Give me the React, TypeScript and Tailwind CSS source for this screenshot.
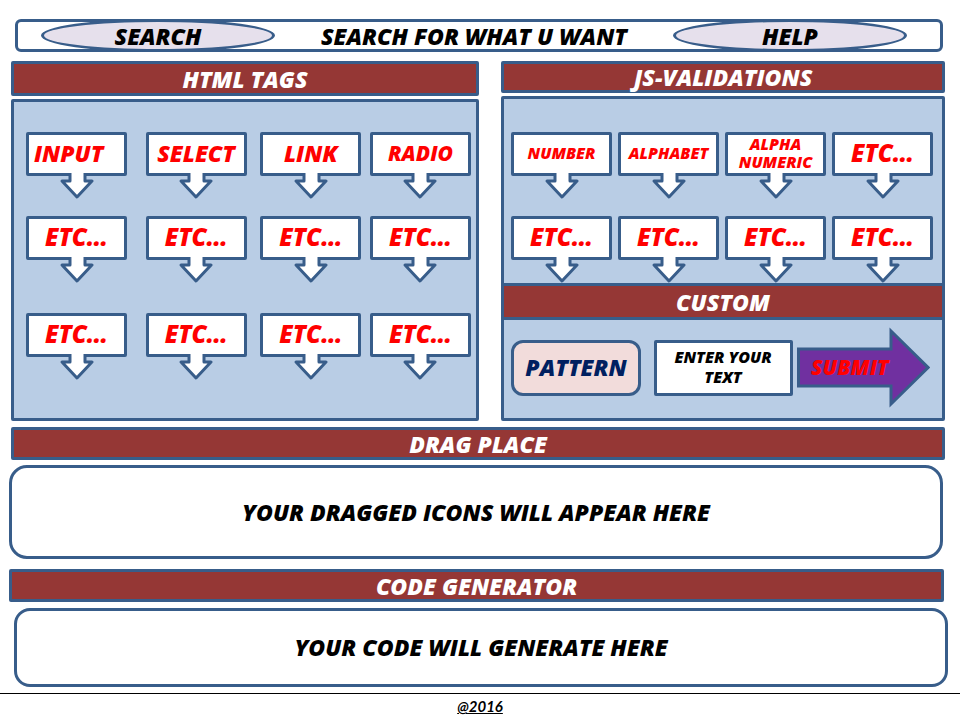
import type { ReactNode } from "react";

const tags = [
  { label: "INPUT", style: "text-[23px] justify-start" },
  { label: "SELECT", style: "text-[23px] justify-center" },
  { label: "LINK", style: "text-[23px] justify-center" },
  { label: "RADIO", style: "text-[21px] justify-center" },
];

const validations = [
  { label: "NUMBER", style: "text-base justify-center" },
  { label: "ALPHABET", style: "text-base justify-center" },
  { label: "ALPHA NUMERIC", style: "text-base justify-center" },
  { label: "ETC…", style: "text-2xl justify-center" },
];

const etc = { label: "ETC…", style: "text-2xl justify-center" };

function Callout({ label, style }: { label: string; style: string }) {
  return (
    <button type="button" className="flex w-[101px] flex-col items-center font-extrabold italic text-[#ff0000]">
      <span
        className={`flex h-[44px] w-full items-center rounded-xs border-3 border-[#385d8a] bg-white px-[5px] pb-[2px] ${style} leading-[18px]`}
      >
        {label}
      </span>
      <svg className="-mt-[3px] h-[26px] w-[36px]" viewBox="0 0 36 26" aria-hidden="true">
        <path d="M11 0V8H3L18 24L33 8H26V0" fill="#fff" stroke="#385d8a" strokeWidth="3" strokeLinejoin="round" />
      </svg>
    </button>
  );
}

function TitleBar({ children, className }: { children: ReactNode; className: string }) {
  return (
    <h2
      className={`flex items-center justify-center bg-[#953735] border-[#385d8a] text-[23px] leading-6 font-extrabold italic text-white ${className}`}
    >
      {children}
    </h2>
  );
}

export default function App() {
  return (
    <div className="bg-white pt-[19px] font-['Open_Sans','Liberation_Sans',sans-serif] text-black">
      <header className="ml-[15px] mr-[17px] flex h-[33px] items-center justify-between rounded-md border-3 border-[#385d8a] pl-[23px] pr-[33px]">
        <button
          type="button"
          className="h-[33px] w-[234px] shrink-0 rounded-[50%] border-3 border-[#385d8a] bg-[#e6e0ec] text-[23px] leading-6 font-extrabold italic"
        >
          SEARCH
        </button>
        <input
          type="text"
          aria-label="Search"
          placeholder="SEARCH FOR WHAT U WANT"
          className="h-6 min-w-0 flex-1 bg-transparent text-center text-[23px] leading-6 font-extrabold italic outline-none placeholder:text-black placeholder:opacity-100"
        />
        <button
          type="button"
          className="h-[33px] w-[234px] shrink-0 rounded-[50%] border-3 border-[#385d8a] bg-[#e6e0ec] text-[23px] leading-6 font-extrabold italic"
        >
          HELP
        </button>
      </header>

      <main>
        <div className="ml-[11px] mr-[15px] mt-[9px] grid grid-cols-[468fr_444fr] gap-[22px]">
          <section className="flex flex-col gap-[3px]">
            <TitleBar className="h-[35px] rounded-xs border-3">HTML TAGS</TitleBar>
            <div className="flex-1 rounded-xs border-3 border-[#385d8a] bg-[#b9cde5] pt-[30px] pr-[5px] pl-[12px]">
              <div className="grid grid-cols-[120fr_115fr_110fr_101fr]">
                {tags.map((t) => (
                  <Callout key={t.label} {...t} />
                ))}
              </div>
              <div className="mt-[17px] grid grid-cols-[120fr_115fr_110fr_101fr]">
                {[1, 2, 3, 4].map((n) => (
                  <Callout key={n} {...etc} />
                ))}
              </div>
              <div className="mt-[30px] grid grid-cols-[120fr_115fr_110fr_101fr]">
                {[1, 2, 3, 4].map((n) => (
                  <Callout key={n} {...etc} />
                ))}
              </div>
            </div>
          </section>

          <section className="flex flex-col gap-[3px]">
            <TitleBar className="h-[32px] rounded-xs border-3">JS-VALIDATIONS</TitleBar>
            <div className="rounded-xs border-3 border-[#385d8a] bg-[#b9cde5]">
              <div className="flex justify-between pt-[33px] pr-[9px] pl-[7px]">
                {validations.map((v) => (
                  <Callout key={v.label} {...v} />
                ))}
              </div>
              <div className="mt-[17px] flex justify-between pr-[9px] pl-[7px]">
                {[1, 2, 3, 4].map((n) => (
                  <Callout key={n} {...etc} />
                ))}
              </div>
              <TitleBar className="h-[37px] border-y-3">CUSTOM</TitleBar>
              <div className="flex items-center justify-between pt-[7px] pr-[12px] pb-[10px] pl-[7px]">
                <button
                  type="button"
                  className="h-14 w-[130px] rounded-xl border-3 border-[#385d8a] bg-[#f2dcdb] text-[23px] font-extrabold italic text-[#002060]"
                >
                  PATTERN
                </button>
                <textarea
                  aria-label="Pattern text"
                  placeholder="ENTER YOUR TEXT"
                  rows={2}
                  className="ml-2 h-14 w-[139px] resize-none overflow-hidden rounded-xs border-3 border-[#385d8a] bg-white px-3 py-1 text-center text-base leading-5 font-extrabold italic outline-none placeholder:text-black placeholder:opacity-100"
                />
                <button
                  type="button"
                  className="relative flex h-[81px] w-[133px] items-center pl-[14px] text-[21px] font-extrabold italic text-[#ff0000]"
                >
                  <svg className="absolute inset-0 h-full w-full" viewBox="0 0 133 81" aria-hidden="true">
                    <path d="M1.5 22V59H94V77L131 40.5L94 4V22Z" fill="#7030a0" stroke="#385d8a" strokeWidth="3" />
                  </svg>
                  <span className="relative">SUBMIT</span>
                </button>
              </div>
            </div>
          </section>
        </div>

        <section>
          <TitleBar className="ml-[11px] mr-[15px] mt-[6px] h-[33px] rounded-xs border-3">DRAG PLACE</TitleBar>
          <div className="ml-[9px] mr-[17px] mt-[5px] flex h-[94px] items-center justify-center rounded-[18px] border-3 border-[#385d8a] text-[23px] font-extrabold italic">
            YOUR DRAGGED ICONS WILL APPEAR HERE
          </div>
        </section>

        <section>
          <TitleBar className="ml-[9px] mr-[16px] mt-[10px] h-[33px] rounded-xs border-3">CODE GENERATOR</TitleBar>
          <div className="ml-[14px] mr-[12px] mt-[6px] flex h-[79px] items-center justify-center rounded-[16px] border-3 border-[#385d8a] text-[23px] font-extrabold italic">
            YOUR CODE WILL GENERATE HERE
          </div>
        </section>
      </main>

      <footer className="mt-[6px] border-t border-black pt-[2px] text-center font-[Lato,sans-serif] text-[15px] leading-5 font-bold italic underline">
        @2016
      </footer>
    </div>
  );
}
